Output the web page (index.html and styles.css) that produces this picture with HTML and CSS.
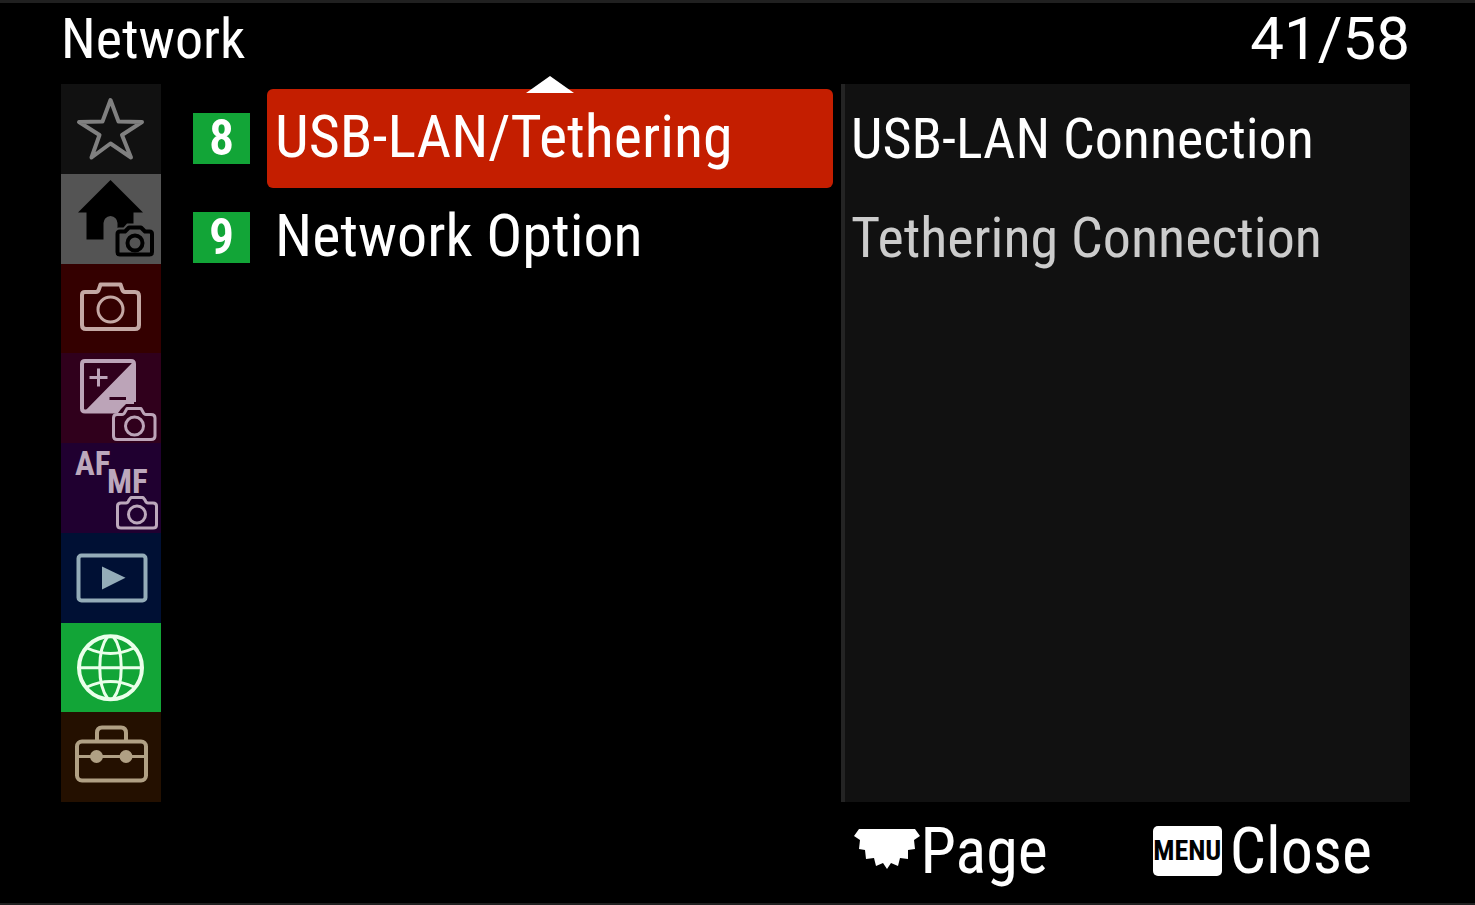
FILE: index.html
```html
<!DOCTYPE html>
<html lang="en">
<head>
<meta charset="utf-8">
<meta name="viewport" content="width=device-width, initial-scale=1">
<title>Network</title>
<link rel="stylesheet" href="styles.css">
</head>
<body>
<div class="screen">
  <header class="header">
    <h1 class="title">Network</h1>
    <span class="counter">41/58</span>
  </header>

  <main class="main">
    <nav class="tabs" aria-label="Menu tabs">
      <button class="tab tab-star" aria-label="My Menu">
        <svg class="icon" viewBox="0 0 100 89"><path class="line" d="M49.500 16L57.500 37.500L81 38L61 51L70 73.500L49.500 59.500L30.500 73.500L38.500 51L18 38L41.500 37.500Z"/></svg>
      </button>
      <button class="tab tab-home" aria-label="Main">
        <svg class="icon" viewBox="0 0 100 89">
          <path class="solid" d="M49.500 6L82 38.500H72.500V49.500H66L62.500 53.500H57.500L56.500 54V49Q56 43 49.500 42Q43 43 42.500 49V65.500H25.500V38.500H17Z"/>
          <path class="line" d="M59 57.500H64L68 53.500H80L84 57.500H88.500Q91 57.500 91 60V78Q91 80.500 88.500 80.500H59Q56.500 80.500 56.500 78V60Q56.500 57.500 59 57.500Z"/>
          <circle class="line" cx="74" cy="69" r="7.500"/>
        </svg>
      </button>
      <button class="tab tab-shoot" aria-label="Shooting">
        <svg class="icon" viewBox="0 0 100 89">
          <path class="line" d="M24 28H35Q37 28 38 25L39.500 20.500H59.500L61 25Q62 28 64 28H74Q78 28 78 32V61Q78 65 74 65H25Q21 65 21 61V31Q21 28 24 28Z"/>
          <circle class="thin" cx="49.500" cy="45.500" r="12.500"/>
        </svg>
      </button>
      <button class="tab tab-expo" aria-label="Exposure/Color">
        <svg class="icon" viewBox="0 0 100 89">
          <path class="solid" d="M73 7V50H65L60 55L57 59H22Z"/>
          <path class="line" d="M55 57.500H24Q21 57.500 21 54.500V10Q21 7 24 7H70Q73 7 73 10V48"/>
          <path class="thin" d="M37.500 14.500V32.500M28.500 23.500H46.500"/>
          <path class="cut" d="M48.500 44.500H65"/>
          <path class="thin" d="M56 60.500H61Q63 60.500 64 58L66 54.500H80L82 58Q83 60.500 85 60.500H90Q94 60.500 94 64V82Q94 85.500 90 85.500H56Q52.500 85.500 52.500 82V64Q52.500 60.500 56 60.500Z"/>
          <circle class="thin" cx="73.500" cy="72" r="9"/>
        </svg>
      </button>
      <button class="tab tab-focus" aria-label="Focus">
        <svg class="icon" viewBox="0 0 100 89">
          <text class="glyph" x="14" y="32">AF</text>
          <text class="glyph" x="46" y="50">MF</text>
          <path class="thin" d="M60 60H65Q67 60 68 57L70 54.500H82L84 57Q85 60 87 60H92Q95.500 60 95.500 63V82Q95.500 85 92 85H60Q56.500 85 56.500 82V63Q56.500 60 60 60Z"/>
          <circle class="thin" cx="76" cy="71.500" r="8.500"/>
        </svg>
      </button>
      <button class="tab tab-play" aria-label="Playback">
        <svg class="icon" viewBox="0 0 100 89">
          <rect class="line" x="17.500" y="22.500" width="67" height="45" rx="3"/>
          <path class="solid" d="M41 33.500L64.500 44.800L41 56.500Z"/>
        </svg>
      </button>
      <button class="tab tab-net" aria-label="Network" aria-current="page">
        <svg class="icon" viewBox="0 0 100 89">
          <circle class="line" cx="49.500" cy="44.800" r="31.500"/>
          <path class="thin" d="M18 44.800H81M26 25Q49.500 36 73 25M26 64Q49.500 53 73 64"/>
          <path class="thin" d="M47 13C36 27 36 62 47 76M52 13C63 27 63 62 52 76"/>
        </svg>
      </button>
      <button class="tab tab-setup" aria-label="Setup">
        <svg class="icon" viewBox="0 0 100 89">
          <rect class="line" x="16" y="28.500" width="69" height="39" rx="5"/>
          <path class="line" d="M36 28V20Q36 14.500 41 14.500H60Q65 14.500 65 20V28"/>
          <path class="thin" d="M16 43.500H85"/>
          <circle class="solid" cx="35.500" cy="43.500" r="6.500"/>
          <circle class="solid" cx="65" cy="43.500" r="6.500"/>
        </svg>
      </button>
    </nav>

    <ul class="groups">
      <li class="group">
        <span class="badge">8</span>
        <button class="entry entry-active">USB-LAN/Tethering
          <svg class="up" viewBox="0 0 48 17"><path d="M24 0L48 17H0Z"/></svg>
        </button>
      </li>
      <li class="group">
        <span class="badge">9</span>
        <button class="entry">Network Option</button>
      </li>
    </ul>

    <section class="panel" aria-label="USB-LAN/Tethering">
      <button class="option">USB-LAN Connection</button>
      <button class="option option-dim">Tethering Connection</button>
    </section>
  </main>

  <footer class="footer">
    <button class="hint">
      <svg class="dial" viewBox="0 0 66 44"><path d="M5 0H61L66 7L60 11L61 20L54 21L54 30L46 29L44 37L37 34L33 40L29 34L22 37L20 29L12 30L11 21L5 20L6 11L0 7Z"/></svg>
      Page
    </button>
    <button class="hint"><span class="menu-key">MENU</span>Close</button>
  </footer>
</div>
</body>
</html>
```
FILE: styles.css
```css
* {
  box-sizing: border-box;
}

body {
  margin: 0;
  background: #000;
  color: #fff;
  font-family: "Roboto Condensed", "Liberation Sans Narrow", "Liberation Sans", sans-serif;
}

button {
  margin: 0;
  padding: 0;
  border: 0;
  background: none;
  color: inherit;
  font: inherit;
  text-align: left;
  white-space: nowrap;
  cursor: pointer;
}

.screen {
  display: grid;
  grid-template-rows: auto 1fr auto;
  min-height: 100vh;
  padding: 0 65px 0 61px;
  border-top: 3px solid #202020;
  border-bottom: 2px solid #202020;
}

.header {
  display: flex;
  justify-content: space-between;
  height: 81px;
  font-size: 56px;
  line-height: 72px;
}

.title {
  margin: 0;
  font-size: inherit;
  font-weight: 400;
}

.counter {
  font-family: Roboto, "Liberation Sans", sans-serif;
  font-size: 60px;
}

.main {
  display: grid;
  grid-template-columns: 100px minmax(0, 680fr) minmax(0, 569fr);
}

.tabs {
  display: grid;
  grid-template-rows: repeat(8, 1fr);
}

.tab {
  display: grid;
  align-items: center;
}

.icon {
  display: block;
  width: 100%;
}

.line,
.thin,
.cut {
  fill: none;
  stroke: currentColor;
  stroke-width: 4;
  stroke-linejoin: round;
}

.thin {
  stroke-width: 3;
}

.cut {
  stroke: #30001c;
  stroke-width: 3;
}

.solid {
  fill: currentColor;
}

.glyph {
  fill: currentColor;
  font-size: 33px;
  font-weight: 700;
}

.tab-star { background: #111; color: #808080; }
.tab-home { background: #545454; color: #000; }
.tab-shoot { background: #340000; color: #c4a8a4; }
.tab-expo { background: #30001c; color: #bca4b8; }
.tab-focus { background: #200030; color: #bca8bc; }
.tab-play { background: #001034; color: #94acb8; }
.tab-net { background: #12a537; color: #eaffea; }
.tab-setup { background: #241000; color: #b0a084; }

.groups {
  margin: 0;
  padding: 5px 8px 0 32px;
  list-style: none;
}

.group {
  display: grid;
  grid-template-columns: 57px 1fr;
  gap: 17px;
  align-items: center;
  height: 99px;
}

.badge {
  background: #12a537;
  font-size: 50px;
  font-weight: 600;
  line-height: 51px;
  text-align: center;
}

.entry {
  position: relative;
  height: 99px;
  padding: 0 8px 4px;
  border-radius: 6px;
  font-size: 60px;
}

.entry-active {
  background: #c41e00;
}

.up {
  position: absolute;
  top: -13px;
  left: calc(50% - 24px);
  width: 48px;
  fill: #fff;
}

.panel {
  display: flex;
  flex-direction: column;
  padding: 5px 6px 0;
  border-left: 4px solid #242424;
  background: #111;
}

.option {
  height: 99px;
  font-size: 56px;
}

.option-dim {
  color: #ccc;
}

.footer {
  display: flex;
  justify-content: flex-end;
  gap: 105px;
  height: 101px;
  padding-right: 38px;
  font-size: 64px;
}

.hint {
  display: flex;
  align-items: center;
  height: 98px;
}

.dial {
  width: 66px;
  fill: #fff;
}

.menu-key {
  width: 69px;
  margin-right: 8px;
  border-radius: 5px;
  background: #fff;
  color: #000;
  font-size: 28px;
  font-weight: 700;
  line-height: 50px;
  text-align: center;
}
```
